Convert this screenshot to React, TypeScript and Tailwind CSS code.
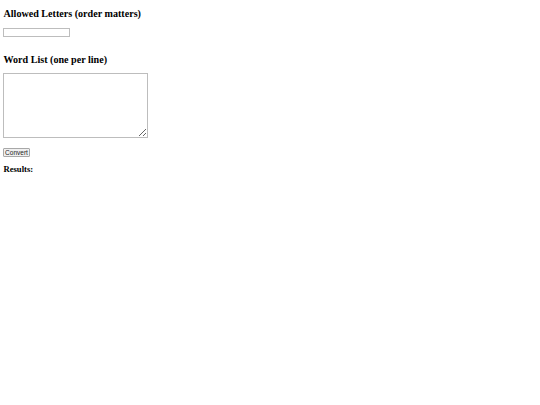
import React from 'react';

export default function App() {
  const [letters, setLetters] = React.useState<string>("");
  const [words, setWords] = React.useState<string>("");
  const [results, setResults] = React.useState<string[]>([]);

  const convert = () => {
    const allowed = letters.toLowerCase();
    const out = words
      .split("\n")
      .map((w) => w.trim())
      .filter((w) => w.length > 0 && [...w.toLowerCase()].every((c) => allowed.includes(c)));
    setResults(out);
  };

  return (
    <main className="min-h-screen w-full bg-white pl-[3px] pt-[8px] text-black font-['Liberation_Serif',serif]">
      {/* Allowed letters */}
      <h3 className="pl-[0.5px] text-[10.1px] leading-[12px] font-bold">Allowed Letters (order matters)</h3>
      <input
        type="text"
        value={letters}
        onChange={(e) => setLetters(e.target.value)}
        className="mt-[8px] block h-[9px] w-[67px] border border-[#bdbdbd] bg-white px-[1px] text-[7px] outline-none font-['Liberation_Sans',sans-serif]"
      />

      {/* Word list */}
      <h3 className="mt-[17px] pl-[0.5px] text-[10.1px] leading-[12px] font-bold">Word List (one per line)</h3>
      <textarea
        value={words}
        onChange={(e) => setWords(e.target.value)}
        className="mt-[7px] block h-[65px] w-[145px] resize border border-[#bdbdbd] bg-white p-[1px] text-[7px] outline-none font-['Liberation_Mono',monospace]"
      />

      <button
        onClick={convert}
        className="mt-[10px] block h-[9px] w-[27px] border border-[#a8a8a8] bg-[#f0f0f0] text-[6.5px] leading-[7px] text-[#222] rounded-[1px] font-['Liberation_Sans',sans-serif]"
      >
        Convert
      </button>

      <div className="mt-[7px] pl-[0.5px] text-[8.6px] leading-[10px] font-bold">Results:</div>
      <div className="text-[8.6px] leading-[10px]">
        {results.map((r, i) => (
          <div key={i}>{r}</div>
        ))}
      </div>
    </main>
  );
}
